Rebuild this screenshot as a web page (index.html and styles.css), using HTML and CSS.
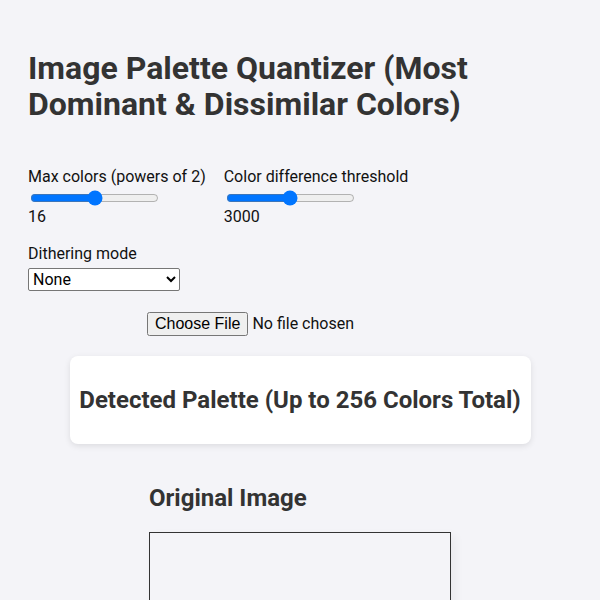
FILE: index.html
```html
<!DOCTYPE html>
<html lang="en">

<head>
    <meta charset="UTF-8">
    <meta name="viewport" content="width=device-width, initial-scale=1.0">
    <title>Image Palette Quantizer</title>
    <link rel="stylesheet" href="styles.css">
</head>

<body>
    <h1>Image Palette Quantizer (Most Dominant &amp; Dissimilar Colors)</h1>

    <div class="controls">
        <div class="control">
            <label for="maxColors">Max colors (powers of 2)</label>
            <input type="range" id="maxColors" min="0" max="8" value="4">
            <span class="value">16</span>
        </div>
        <div class="control">
            <label for="threshold">Color difference threshold</label>
            <input type="range" id="threshold" min="0" max="6000" value="3000">
            <span class="value">3000</span>
        </div>
    </div>

    <div class="control dither">
        <label for="dither">Dithering mode</label>
        <select id="dither" class="select">
            <option>None</option>
            <option>Floyd-Steinberg</option>
            <option>Ordered</option>
        </select>
    </div>

    <div class="upload">
        <input type="file" id="file" accept="image/*">
    </div>

    <div class="palette-card">
        <h2>Detected Palette (Up to 256 Colors Total)</h2>
        <div class="palette"></div>
    </div>

    <div class="preview">
        <div class="preview-box">
            <h2>Original Image</h2>
            <canvas id="original" width="300" height="300"></canvas>
        </div>
    </div>
</body>

</html>
```

FILE: styles.css
```css
* {
    box-sizing: border-box;
}

body {
    font-family: Roboto, "Noto Sans", sans-serif;
    background-color: #f4f4f8;
    color: #333;
    margin: 0;
    padding: 28px;
}

h1 {
    font-size: 32px;
    line-height: 36px;
    font-weight: 700;
    margin: 22px 0 45px;
    max-width: 460px;
}

.controls {
    display: flex;
    gap: 18px;
}

.control {
    display: flex;
    flex-direction: column;
    align-items: flex-start;
    font-size: 16px;
    color: #111;
}

.control label {
    line-height: 20px;
}

.control input[type="range"] {
    width: 129px;
    margin: 3px 2px 1px;
}

.value {
    line-height: 20px;
}

.dither {
    margin-top: 17px;
}

.select {
    width: 152px;
    height: 23px;
    margin-top: 4px;
    font-family: Roboto, sans-serif;
    font-size: 16px;
    color: #000;
    background-color: #fff;
    border: 1px solid #767676;
    border-radius: 2px;
}

.upload {
    display: flex;
    justify-content: center;
    margin-top: 21px;
}

.upload input {
    font-family: Roboto, sans-serif;
    font-size: 16px;
    color: #111;
    width: 306px;
}

.palette-card {
    max-width: 461px;
    margin: 20px auto 0;
    padding: 17px 8px;
    background-color: #fff;
    border-radius: 8px;
    box-shadow: 0 2px 6px rgba(0, 0, 0, 0.1);
}

.palette-card h2 {
    margin: 13px 0;
    font-size: 24px;
    line-height: 28px;
    text-align: center;
}

.preview {
    display: flex;
    justify-content: center;
    margin-top: 40px;
}

.preview-box h2 {
    font-size: 24px;
    line-height: 28px;
    margin: 0 0 20px;
}

canvas {
    display: block;
    width: 302px;
    height: 302px;
    border: 1px solid #333;
    box-shadow: 4px 4px 10px rgba(0, 0, 0, 0.05);
}
```
